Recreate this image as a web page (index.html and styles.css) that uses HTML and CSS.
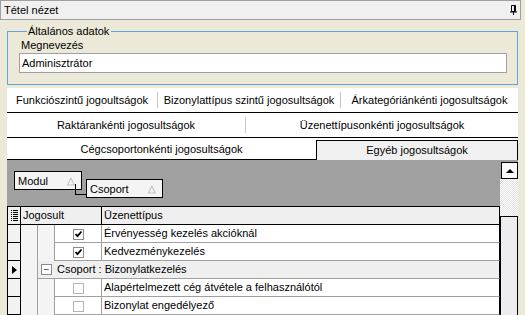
FILE: index.html
```html
<!DOCTYPE html>
<html lang="hu">
<head>
<meta charset="utf-8">
<title>Tétel nézet</title>
<link rel="stylesheet" href="styles.css">
</head>
<body>
<div class="titlebar">
  <span class="title">Tétel nézet</span>
  <svg class="pin" width="7" height="10" viewBox="0 0 7 10"><path d="M1.5 0.5h4v6h-4z" fill="none" stroke="#000"/><path d="M4.5 0.5v6" stroke="#000"/><path d="M0 7h7" stroke="#000"/><path d="M3.5 7v3" stroke="#000"/></svg>
</div>
<div class="content">
  <fieldset class="group">
    <legend>Általános adatok</legend>
    <div class="field-label">Megnevezés</div>
    <div class="input">Adminisztrátor</div>
  </fieldset>

  <div class="tabs">
    <div class="tabrow r1">
      <div class="tab t150"><span>Funkciószintű jogoultságok</span></div>
      <div class="tab t183 sep"><span>Bizonylattípus szintű jogosultságok</span></div>
      <div class="tab tfill sep"><span>Árkategóriánkénti jogosultságok</span></div>
    </div>
    <div class="tabrow r2">
      <div class="tab t238"><span>Raktárankénti jogosultságok</span></div>
      <div class="tab tfill sep"><span>Üzenettípusonkénti jogosultságok</span></div>
    </div>
    <div class="tabrow r3">
      <div class="tab3 t309">Cégcsoportonkénti jogosultságok</div>
      <div class="tab3 tfill active">Egyéb jogosultságok</div>
    </div>
  </div>

  <div class="grid">
    <div class="gmain">
      <div class="grouppanel">
        <div class="gbox modul"><span>Modul</span><span class="tri">△</span></div>
        <div class="gbox csoport"><span>Csoport</span><span class="tri">△</span></div>
      </div>
      <div class="hrow">
        <div class="sel hsel"><svg width="7" height="11" viewBox="0 0 7 11"><g fill="#000"><rect x="0" y="0" width="1" height="1"/><rect x="2" y="0" width="5" height="1"/><rect x="0" y="2" width="1" height="1"/><rect x="2" y="2" width="5" height="1"/><rect x="0" y="4" width="1" height="1"/><rect x="2" y="4" width="5" height="1"/><rect x="0" y="6" width="1" height="1"/><rect x="2" y="6" width="5" height="1"/><rect x="0" y="8" width="1" height="1"/><rect x="2" y="8" width="5" height="1"/><rect x="0" y="10" width="1" height="1"/><rect x="2" y="10" width="5" height="1"/></g></svg></div>
        <div class="hcell hjog">Jogosult</div>
        <div class="hcell htxt">Üzenettípus</div>
      </div>
      <div class="row">
        <div class="sel"></div>
        <div class="ind"></div>
        <div class="ind"></div>
        <div class="chk"><span class="cb on"><svg width="9" height="9" viewBox="0 0 9 9"><path d="M1.5 4l2 2.2 4-4.7" fill="none" stroke="#000" stroke-width="1.8"/></svg></span></div>
        <div class="txt">Érvényesség kezelés akcióknál</div>
      </div>
      <div class="row">
        <div class="sel"></div>
        <div class="ind"></div>
        <div class="ind"></div>
        <div class="chk"><span class="cb on"><svg width="9" height="9" viewBox="0 0 9 9"><path d="M1.5 4l2 2.2 4-4.7" fill="none" stroke="#000" stroke-width="1.8"/></svg></span></div>
        <div class="txt">Kedvezménykezelés</div>
      </div>
      <div class="row">
        <div class="sel cur"><span class="arrow"></span></div>
        <div class="ind"></div>
        <div class="ghead"><span class="minus">−</span>Csoport : Bizonylatkezelés</div>
      </div>
      <div class="row">
        <div class="sel"></div>
        <div class="ind"></div>
        <div class="ind"></div>
        <div class="chk"><span class="cb"></span></div>
        <div class="txt">Alapértelmezett cég átvétele a felhasználótól</div>
      </div>
      <div class="row">
        <div class="sel"></div>
        <div class="ind"></div>
        <div class="ind"></div>
        <div class="chk"><span class="cb"></span></div>
        <div class="txt">Bizonylat engedélyező</div>
      </div>
      <div class="row">
        <div class="sel"></div>
        <div class="ind"></div>
        <div class="ind"></div>
        <div class="chk"></div>
        <div class="txt"></div>
      </div>
    </div>
    <div class="vscroll">
      <div class="upbtn"><span class="uptri"></span></div>
      <div class="track"></div>
      <div class="thumb"></div>
    </div>
  </div>
</div>
</body>
</html>
```

FILE: styles.css
```css
* { box-sizing: border-box; }
html, body { margin: 0; padding: 0; }
body {
  width: 525px;
  height: 315px;
  overflow: hidden;
  background: #ece9d8;
  font-family: "Liberation Sans", Arial, sans-serif;
  font-size: 11px;
  color: #000;
}

.titlebar {
  width: 521px;
  height: 20px;
  border: 1px solid #a0a0a0;
  background: #f0f0f0;
  display: flex;
  align-items: center;
  justify-content: space-between;
  padding: 0 3px 0 3px;
}
.title { line-height: 18px; }
.pin { display: block; }

.content {
  margin: 0 7px 0 7px;
  width: 511px;
}

.group {
  margin: 5px 0 0 0;
  padding: 0 10px 11px 11px;
  border: 1px solid #5ea6dc;
  min-width: 0;
}
.group legend {
  margin-left: 8px;
  padding: 0 2px 0 1px;
  line-height: 13px;
}
.field-label {
  height: 15px;
  line-height: 15px;
  padding-left: 2px;
}
.input {
  height: 20px;
  width: 488px;
  border: 1px solid #a0a0a0;
  background: #fff;
  line-height: 18px;
  padding-left: 2px;
}

.tabs {
  margin-top: 3px;
  background: #fff;
}
.tabrow {
  display: flex;
  align-items: center;
  border-bottom: 1px solid #000;
}
.r1, .r2 { height: 25px; }
.tab {
  height: 16px;
  line-height: 16px;
  text-align: center;
  white-space: nowrap;
}
.tab.sep { border-left: 1px solid #c4c4c4; }
.t150 { width: 150px; }
.t183 { width: 183px; }
.t238 { width: 238px; }
.t309 { width: 309px; }
.tfill { flex: 1; }

.r3 {
  height: 22px;
  align-items: stretch;
  border-bottom: none;
}
.tab3 {
  text-align: center;
  white-space: nowrap;
  line-height: 20px;
  border-bottom: 1px solid #000;
  padding-top: 1px;
}
.tab3.active {
  margin-top: 2px;
  background: #f0f0f0;
  border: 1px solid #000;
  border-bottom: none;
  line-height: 19px;
  padding-top: 0;
}

.grid {
  display: flex;
  height: 155px;
  overflow: hidden;
}
.gmain { width: 493px; }
.grouppanel {
  height: 46px;
  background: #a0a0a0;
  display: flex;
  align-items: flex-start;
  padding: 11px 0 0 7px;
}
.gbox {
  height: 19px;
  border: 1px solid #000;
  background: #f4f4f4;
  display: flex;
  align-items: center;
  justify-content: space-between;
  padding: 0 6px 0 3px;
}
.modul { width: 68px; }
.csoport {
  width: 77px;
  margin: 8px 0 0 4px;
  position: relative;
}
.csoport::before {
  content: "";
  position: absolute;
  left: -12px;
  top: 4px;
  width: 11px;
  height: 10px;
  border-left: 1px solid #000;
  border-bottom: 1px solid #000;
}
.tri { color: #9a9a9a; font-size: 10px; }

.hrow, .row {
  display: flex;
  height: 18px;
}
.hrow {
  height: 19px;
  border-top: 1px solid #000;
  border-bottom: 1px solid #000;
  background: #efefef;
}
.sel {
  width: 14px;
  flex: none;
  border-left: 1px solid #000;
  border-right: 1px solid #000;
  border-bottom: 1px solid #000;
  background: #f2f2f2;
  display: flex;
  align-items: center;
  justify-content: center;
}
.hsel { border-bottom: none; background: #efefef; padding-left: 1px; }
.hcell {
  line-height: 17px;
  padding-left: 2px;
  border-right: 1px solid #000;
}
.hjog { width: 81px; }
.htxt { width: 398px; }

.ind {
  width: 17px;
  flex: none;
  background: #f4f4f4;
  border-right: 1px solid #a0a0a0;
}
.chk {
  width: 47px;
  flex: none;
  border-right: 1px solid #a0a0a0;
  border-bottom: 1px solid #a0a0a0;
  background: #fff;
  display: flex;
  align-items: center;
  justify-content: center;
}
.txt {
  width: 398px;
  flex: none;
  border-right: 1px solid #000;
  border-bottom: 1px solid #a0a0a0;
  background: #fff;
  line-height: 17px;
  padding-left: 2px;
  white-space: nowrap;
}
.ghead {
  width: 462px;
  flex: none;
  border-right: 1px solid #000;
  border-bottom: 1px solid #a0a0a0;
  background: #efefef;
  line-height: 17px;
  display: flex;
  align-items: center;
  padding-left: 3px;
}
.minus {
  width: 11px;
  height: 11px;
  border: 1px solid #8a8a8a;
  background: #fff;
  display: inline-flex;
  align-items: center;
  justify-content: center;
  font-size: 10px;
  line-height: 9px;
  margin-right: 5px;
  color: #333;
}
.cb {
  width: 11px;
  height: 11px;
  border: 1px solid #b4b4b4;
  background: #fff;
  display: flex;
  align-items: center;
  justify-content: center;
  margin-top: 1px;
}
.cb.on { border-color: #8c8c8c; }
.cb svg { display: block; }
.arrow {
  width: 0;
  height: 0;
  border-top: 4px solid transparent;
  border-bottom: 4px solid transparent;
  border-left: 5px solid #000;
  margin-left: 1px;
}

.vscroll {
  width: 18px;
  display: flex;
  flex-direction: column;
  background: #a0a0a0;
  padding-top: 2px;
}
.upbtn {
  height: 17px;
  flex: none;
  margin-left: 1px;
  border: 1px solid #000;
  background: #f8f8f8;
  display: flex;
  align-items: center;
  justify-content: center;
}
.uptri {
  width: 0;
  height: 0;
  border-left: 4px solid transparent;
  border-right: 4px solid transparent;
  border-bottom: 4px solid #000;
}
.track {
  height: 37px;
  flex: none;
  background-color: #fff;
  background-image: repeating-conic-gradient(#ffffff 0 25%, #e2e2e2 0 50%);
  background-size: 2px 2px;
}
.thumb {
  flex: 1;
  border: 1px solid #000;
  border-bottom: none;
  background: #ededf0;
}
```
